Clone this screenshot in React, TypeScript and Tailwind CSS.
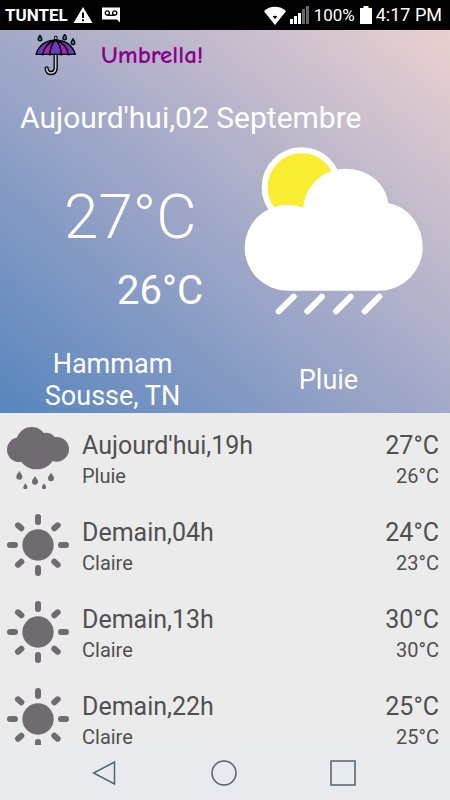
import { ReactNode } from 'react';
import clsx from 'clsx';

type Condition = 'rain' | 'clear';

interface ForecastEntry {
  time: string;
  label: string;
  condition: Condition;
  high: string;
  low: string;
}

const forecast: ForecastEntry[] = [
  { time: "Aujourd'hui,19h", label: 'Pluie', condition: 'rain', high: '27°C', low: '26°C' },
  { time: 'Demain,04h', label: 'Claire', condition: 'clear', high: '24°C', low: '23°C' },
  { time: 'Demain,13h', label: 'Claire', condition: 'clear', high: '30°C', low: '30°C' },
  { time: 'Demain,22h', label: 'Claire', condition: 'clear', high: '25°C', low: '25°C' },
];

const StatusBar = () => (
  <div className="flex h-[30px] shrink-0 items-center justify-between bg-black pl-[5px] pr-2 text-white">
    <div className="flex items-center">
      <span className="text-[17px] leading-5 font-bold">TUNTEL</span>
      <svg className="ml-[5px] h-[18px] w-5" viewBox="0 0 20 18" aria-hidden="true">
        <path d="M10 1 19.5 17H.5Z" fill="#fff" />
        <path d="M9 6.5h2V12H9zM9 13.2h2v2H9z" fill="#000" />
      </svg>
      <svg className="ml-2 h-4 w-5" viewBox="0 0 20 16" aria-hidden="true">
        <path d="M1 .5h18v15l-3-3H1Z" fill="#fff" />
        <g fill="none" stroke="#000" strokeWidth="1.3">
          <circle cx="6.3" cy="6" r="2.1" />
          <circle cx="13.7" cy="6" r="2.1" />
          <path d="M6.3 8.3h7.4" />
        </g>
      </svg>
    </div>
    <div className="flex items-center">
      <svg className="h-[19px] w-[22px]" viewBox="0 0 22 19" aria-hidden="true">
        <path d="M0 5.2C5.5-.7 16.5-.7 22 5.2L11 19Z" fill="#fff" />
        <path d="M8.7 10.3q2.3-1 4.6 0L11 13.3Z" fill="#000" />
      </svg>
      <svg className="ml-1 h-[18px] w-[19px]" viewBox="0 0 19 18" aria-hidden="true">
        <path d="M0 13h3v5H0zM4 10h3v8H4zM8 7h3v11H8z" fill="#fff" />
        <path d="M12 3h3v15h-3zM16 0h3v18h-3z" fill="#666" />
      </svg>
      <span className="ml-[5px] text-[17px] leading-5">100%</span>
      <svg className="ml-[5px] h-[18px] w-3" viewBox="0 0 12 18" aria-hidden="true">
        <path d="M3.5 0h5v2H12v16H0V2h3.5z" fill="#fff" />
      </svg>
      <span className="ml-1 text-[18px] leading-5">4:17 PM</span>
    </div>
  </div>
);

const UmbrellaLogo = () => (
  <svg className="h-[42px] w-[42px]" viewBox="0 0 126 126" aria-hidden="true">
    <g fill="#1d8b9b" stroke="#000" strokeWidth="4">
      <path d="M15 4q-7 10-5 14 5 5 10 0 2-4-5-14Z" />
      <path d="M89 1q-7 10-5 14 5 5 10 0 2-4-5-14Z" />
      <path d="M114 15q-7 10-5 14 5 5 10 0 2-4-5-14Z" />
    </g>
    <path d="M62 62V102q-1 15-14 15-12 0-13-14" fill="none" stroke="#000" strokeWidth="13" strokeLinecap="round" />
    <path d="M62 62V102q-1 15-14 15-12 0-13-14" fill="none" stroke="#c3cbd2" strokeWidth="5" strokeLinecap="round" />
    <path d="M59 7h7v10h-7z" fill="#dce2e6" stroke="#000" strokeWidth="3" />
    <g stroke="#000" strokeWidth="4" strokeLinejoin="round">
      <path d="M62 18Q16 20 3 61q10-2 20 1Q28 30 62 18Z" fill="#6b3cc0" />
      <path d="M62 18Q28 30 23 62q11-3 22 0Q46 32 62 18Z" fill="#ae20b8" />
      <path d="M62 18Q46 32 45 62q17-3 34 0Q78 32 62 18Z" fill="#6b3cc0" />
      <path d="M62 18Q78 32 79 62q12-3 22 0Q96 30 62 18Z" fill="#ae20b8" />
      <path d="M62 18Q96 30 101 62q10-3 20-1Q108 20 62 18Z" fill="#6b3cc0" />
    </g>
  </svg>
);

const ShowersIcon = () => (
  <svg className="h-[168px] w-[179px]" viewBox="43 36 537 504" role="img" aria-label="Pluie">
    <circle cx="216" cy="157" r="111" fill="#f9ed32" stroke="#fff" strokeWidth="18" />
    <path
      d="M174 467A129 129 0 0 1 174 209Q198 209 221 218C225 152 282 101 348 101C414 101 469 145 476 205C535 214 579 270 579 336A131 131 0 0 1 450 467Z"
      fill="#fff"
    />
    <path
      d="M192 485l-45 44M277 485l-44 44M363 485l-44 44M449 485l-44 44"
      stroke="#fff"
      strokeWidth="18"
      strokeLinecap="round"
    />
  </svg>
);

const RainIcon = () => (
  <svg className="size-[62px]" viewBox="0 0 186 186" fill="#706a71" aria-hidden="true">
    <circle cx="37" cy="68" r="37" />
    <circle cx="74" cy="46" r="46" />
    <circle cx="117" cy="50" r="33" />
    <circle cx="149" cy="67" r="37" />
    <ellipse cx="89" cy="80" rx="54" ry="47" />
    <path d="M37 132C30 142 28 145 28 149A9 9 0 0 0 46 149C46 145 44 142 37 132Z" />
    <path d="M84 147C77 157 75 160 75 164A9 9 0 0 0 93 164C93 160 91 157 84 147Z" />
    <path d="M132 137C125 147 123 150 123 154A9 9 0 0 0 141 154C141 150 139 147 132 137Z" />
    <path d="M55 169C50 176 49 178 49 181A6 6 0 0 0 61 181C61 178 60 176 55 169Z" />
    <path d="M111 169C106 176 105 178 105 181A6 6 0 0 0 117 181C117 178 116 176 111 169Z" />
  </svg>
);

const SunIcon = () => (
  <svg className="size-[62px]" viewBox="0 0 186 186" fill="#706a71" aria-hidden="true">
    <circle cx="93" cy="93" r="47" />
    <path
      d="M93 9v15M93 162v15M9 93h15M162 93h15M33 34l10 9M152 34l-10 9M33 152l10-9M152 152l-10-9"
      stroke="#706a71"
      strokeWidth="18"
      strokeLinecap="round"
    />
  </svg>
);

const icons: Record<Condition, ReactNode> = {
  rain: <RainIcon />,
  clear: <SunIcon />,
};

const ForecastRow = ({ entry }: { entry: ForecastEntry }) => (
  <li className="flex h-[87px] shrink-0 items-center pr-[11px] pl-[7px] text-[#505050]">
    {icons[entry.condition]}
    <div className="ml-[13px] flex-1 pb-[3px]">
      <p className="text-[25px] leading-10">{entry.time}</p>
      <p className="text-[20px] leading-5">{entry.label}</p>
    </div>
    <div className="pb-[3px] text-right">
      <p className="text-[25px] leading-10">{entry.high}</p>
      <p className="text-[20px] leading-5">{entry.low}</p>
    </div>
  </li>
);

interface NavButtonProps {
  label: string;
  className?: string;
  children: ReactNode;
}

const NavButton = ({ label, className, children }: NavButtonProps) => (
  <button type="button" aria-label={label} className={clsx('flex w-[119px] items-center justify-center', className)}>
    <svg className="size-[26px]" viewBox="0 0 26 26" fill="none" stroke="#52636f" strokeWidth="1.5">
      {children}
    </svg>
  </button>
);

export default function App() {
  return (
    <div className="flex h-screen flex-col bg-[#ebebeb] font-['Roboto',sans-serif]">
      <StatusBar />

      <main className="flex min-h-0 flex-1 flex-col">
        <section className="shrink-0 bg-linear-to-tr from-[#5785bd] via-[#a3a9c8] to-[#ebd1d0] pb-px text-white">
          <header className="flex h-[50px] items-center pl-[35px]">
            <UmbrellaLogo />
            <span className="ml-6 font-['Comic_Neue','Comic_Sans_MS','Lato',sans-serif] text-[25px] leading-8 font-bold text-[#8b008b]">
              Umbrella!
            </span>
          </header>

          <h1 className="pt-[18px] pl-5 text-[30px] leading-10">Aujourd'hui,02 Septembre</h1>

          <div className="grid h-[210px] grid-cols-2">
            <div className="pt-[47px]">
              <p className="pl-16 text-[62px] leading-16 font-light">27°C</p>
              <p className="mt-[22px] pr-[22px] text-right text-[40px] leading-10">26°C</p>
            </div>
            <div className="flex items-start justify-center pt-[9px] pr-2">
              <ShowersIcon />
            </div>
          </div>

          <div className="grid grid-cols-2 items-center text-center text-[27px] leading-8">
            <p className="px-8">Hammam Sousse, TN</p>
            <p className="pr-[18px]">Pluie</p>
          </div>
        </section>

        <ul className="flex min-h-0 flex-1 flex-col overflow-hidden pt-px">
          {forecast.map((entry) => (
            <ForecastRow key={entry.time} entry={entry} />
          ))}
        </ul>
      </main>

      <nav className="flex h-[55px] shrink-0 justify-center bg-[#e8eaee] pr-0.5">
        <NavButton label="Retour">
          <path d="M22.5 2v22L1.5 13Z" />
        </NavButton>
        <NavButton label="Accueil">
          <circle cx="13" cy="13" r="12" />
        </NavButton>
        <NavButton label="Applications récentes">
          <path d="M1 1h24v24H1z" />
        </NavButton>
      </nav>
    </div>
  );
}
